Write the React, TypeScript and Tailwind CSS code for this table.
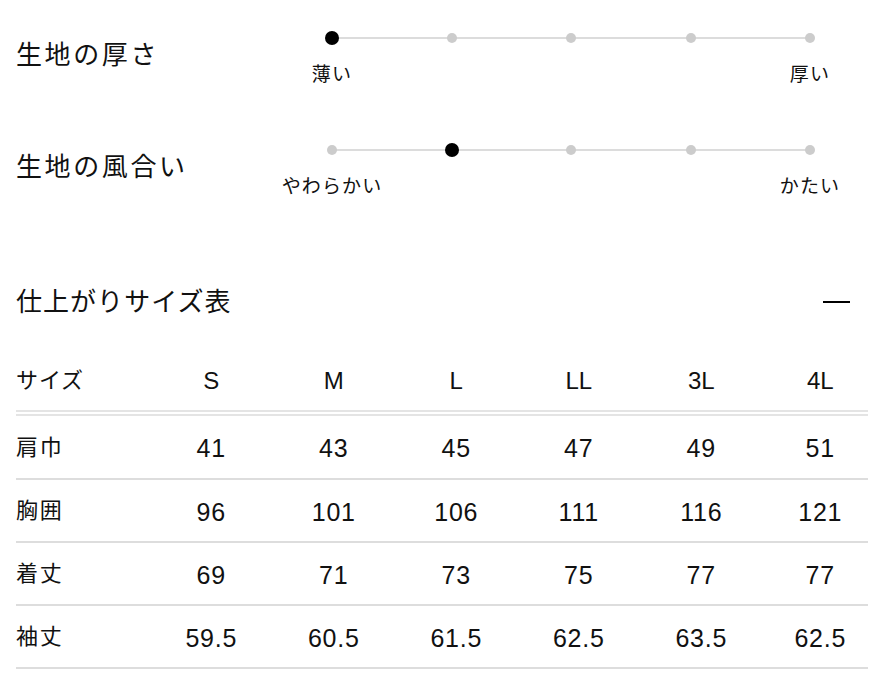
import React from "react";

const font = "font-['Liberation_Sans','Noto_Sans_CJK_JP',sans-serif]";

type SliderProps = { title: string; value: number; left: string; right: string };

function FeelSlider({ title, value, left, right }: SliderProps) {
    return (
        <div className="flex h-[112px]">
            <div className="w-[309px] pt-[8px] text-[26px] leading-[32px] tracking-[0.1em]">{title}</div>
            <div className="w-[492px]">
                <div className="relative flex h-[14px] items-center justify-between">
                    <div className="absolute left-[7px] right-[7px] top-[6px] h-[2px] bg-[#dcdcdc]" />
                    {[0, 1, 2, 3, 4].map((i) => (
                        <div key={i} className="relative flex w-[14px] justify-center">
                            {i === value ? (
                                <div className="h-[14px] w-[14px] rounded-full bg-black" />
                            ) : (
                                <div className="h-[10px] w-[10px] rounded-full bg-[#cccccc]" />
                            )}
                        </div>
                    ))}
                </div>
                <div className="-mx-[53px] mt-[18px] flex justify-between text-[19px] leading-[24px] tracking-[0.06em]">
                    <span className="w-[120px] text-center">{left}</span>
                    <span className="w-[120px] text-center">{right}</span>
                </div>
            </div>
        </div>
    );
}

const sizes = ["S", "M", "L", "LL", "3L", "4L"];
const rows: [string, string[]][] = [
    ["肩巾", ["41", "43", "45", "47", "49", "51"]],
    ["胸囲", ["96", "101", "106", "111", "116", "121"]],
    ["着丈", ["69", "71", "73", "75", "77", "77"]],
    ["袖丈", ["59.5", "60.5", "61.5", "62.5", "63.5", "62.5"]],
];

const cols = "grid grid-cols-[134px_122.5px_122.5px_122.5px_122.5px_122.5px_1fr] items-center";

export default function App() {
    return (
        <div className={`h-[692px] w-[884px] bg-white px-4 pt-[31px] text-[#111] ${font}`}>
            <FeelSlider title="生地の厚さ" value={0} left="薄い" right="厚い" />
            <FeelSlider title="生地の風合い" value={1} left="やわらかい" right="かたい" />

            <div className="mt-[31px] flex h-[32px] items-center justify-between pr-[18px]">
                <h2 className="text-[26px] leading-[32px] tracking-[0.04em]">仕上がりサイズ表</h2>
                <div className="h-[2px] w-[27px] bg-black" />
            </div>

            <div className="mt-[32px] text-[22px]">
                <div className={`${cols} h-[66px] border-b-[6px] border-double border-[#e4e4e4]`}>
                    <span className="tracking-[0.04em]">サイズ</span>
                    {sizes.map((s, i) => (
                        <span key={s} className={`pt-[2px] text-center text-[24px] ${i === 5 ? "pl-[10px]" : ""}`}>{s}</span>
                    ))}
                </div>
                {rows.map(([label, vals], r) => (
                    <div
                        key={label}
                        className={`${cols} ${r === 0 ? "h-[64px]" : "h-[63px]"} border-b-2 border-[#dddddd]`}
                    >
                        <span className="tracking-[0.08em]">{label}</span>
                        {vals.map((v, i) => (
                            <span
                                key={i}
                                className={`pt-[4px] text-center text-[25px] tracking-[0.03em] ${i === 5 ? "pl-[10px]" : ""}`}
                            >
                                {v}
                            </span>
                        ))}
                    </div>
                ))}
            </div>
        </div>
    );
}
